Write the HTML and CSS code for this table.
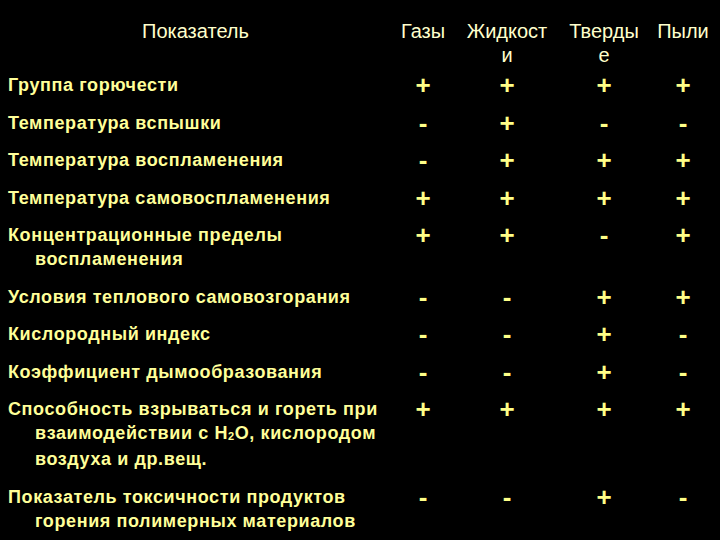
FILE: index.html
```html
<!DOCTYPE html>
<html lang="ru">
<head>
<meta charset="utf-8">
<title>Показатели пожарной опасности</title>
<link rel="stylesheet" href="styles.css">
</head>
<body>
<div class="table">
  <div class="row head">
    <div class="label">Показатель</div>
    <div class="col">Газы</div>
    <div class="col">Жидкост<br>и</div>
    <div class="col">Тверды<br>е</div>
    <div class="col">Пыли</div>
  </div>
  <div class="row">
    <div class="label">Группа горючести</div>
    <div class="sign">+</div><div class="sign">+</div><div class="sign">+</div><div class="sign">+</div>
  </div>
  <div class="row">
    <div class="label">Температура вспышки</div>
    <div class="sign">-</div><div class="sign">+</div><div class="sign">-</div><div class="sign">-</div>
  </div>
  <div class="row">
    <div class="label">Температура воспламенения</div>
    <div class="sign">-</div><div class="sign">+</div><div class="sign">+</div><div class="sign">+</div>
  </div>
  <div class="row">
    <div class="label">Температура самовоспламенения</div>
    <div class="sign">+</div><div class="sign">+</div><div class="sign">+</div><div class="sign">+</div>
  </div>
  <div class="row">
    <div class="label">Концентрационные пределы<br>воспламенения</div>
    <div class="sign">+</div><div class="sign">+</div><div class="sign">-</div><div class="sign">+</div>
  </div>
  <div class="row">
    <div class="label">Условия теплового самовозгорания</div>
    <div class="sign">-</div><div class="sign">-</div><div class="sign">+</div><div class="sign">+</div>
  </div>
  <div class="row">
    <div class="label">Кислородный индекс</div>
    <div class="sign">-</div><div class="sign">-</div><div class="sign">+</div><div class="sign">-</div>
  </div>
  <div class="row">
    <div class="label">Коэффициент дымообразования</div>
    <div class="sign">-</div><div class="sign">-</div><div class="sign">+</div><div class="sign">-</div>
  </div>
  <div class="row">
    <div class="label">Способность взрываться и гореть при<br>взаимодействии с H<sub>2</sub>O, кислородом<br>воздуха и др.вещ.</div>
    <div class="sign">+</div><div class="sign">+</div><div class="sign">+</div><div class="sign">+</div>
  </div>
  <div class="row">
    <div class="label">Показатель токсичности продуктов<br>горения полимерных материалов</div>
    <div class="sign">-</div><div class="sign">-</div><div class="sign">+</div><div class="sign">-</div>
  </div>
</div>
</body>
</html>
```

FILE: styles.css
```css
html, body {
  margin: 0;
  padding: 0;
  background: #000;
  height: 100%;
}
body {
  font-family: "Liberation Sans", Arial, sans-serif;
  color: #ffff99;
  overflow: hidden;
}
.table {
  padding-left: 8px;
}
.row {
  display: grid;
  grid-template-columns: 375px 80px 88px 106px 52px;
  align-items: start;
  padding: 6.75px 0;
  line-height: 24px;
}
.row.head {
  padding: 18.5px 0 0;
  font-size: 20px;
  color: #ffffcc;
  font-weight: normal;
}
.head .label {
  text-align: center;
  font-weight: normal;
  padding: 0;
  text-indent: 0;
  font-size: 20px;
  letter-spacing: 0;
}
.col {
  text-align: center;
}
.label {
  font-size: 18px;
  font-weight: bold;
  letter-spacing: 0.6px;
  padding-left: 27px;
  text-indent: -27px;
  white-space: nowrap;
}
.label sub {
  font-size: 11px;
  vertical-align: baseline;
  position: relative;
  top: 1px;
}
.sign {
  text-align: center;
  font-size: 26px;
  font-weight: bold;
  color: #ffff88;
}
```
